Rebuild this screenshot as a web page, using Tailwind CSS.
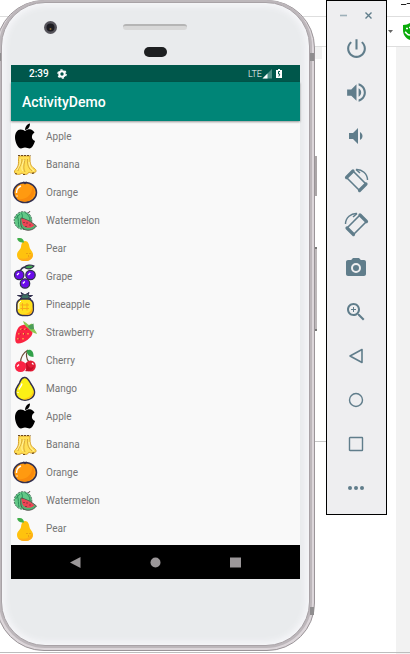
<!DOCTYPE html>
<html lang="en">
<head>
  <meta charset="UTF-8" />
  <meta name="viewport" content="width=device-width, initial-scale=1.0"/>
  <title>ActivityDemo</title>
  <script src="https://cdn.jsdelivr.net/npm/@tailwindcss/browser@4"></script>
</head>
<body class="relative flex h-screen flex-col overflow-hidden bg-white font-[Roboto,sans-serif]">

  <!-- Fruit icons -->
  <svg class="hidden" aria-hidden="true">
    <symbol id="apple" viewBox="0 0 26 28">
      <path d="M13 7C13 4 15 1 18 0.500C18 4 16 6.500 13 7Z"/>
      <path d="M13 8C15 6.500 17 6 19 6.500C20.500 7 21.500 8 22.500 9.500C19 11.500 19 16.500 23 18C22 21 20 25.500 17.500 25.500C16 25.500 15 24.500 13 24.500C11 24.500 10.500 25.500 9 25.500C6 25.500 3 19 3 14.500C3 9.500 5.500 6.500 8.500 6.500C11 6.500 12 7.500 13 8Z"/>
    </symbol>
    <symbol id="banana" viewBox="0 0 26 28">
      <path d="M7 5H18L18 9C18 14 20 16 23 18C25 19.500 24 22 21 22C19 22 18 22 17 21C16 24 12 24 10 22C8 24 3 24 2.500 21C2 19 5 18 6 15C7 12 6 9 7 5Z" fill="#ffdf55" stroke="#d9a32d" stroke-width="1"/>
      <path d="M10 8C10 14 6 17 6 20M13 8C12 14 11 17 13 21M15.500 8C15 14 17 18 20 20" fill="none" stroke="#c8922c" stroke-width="0.700"/>
      <path d="M8 8C9 12 7 16 5 19M12 9C10 14 9 18 11 20M17 11C17 15 19 18 22 20" fill="none" stroke="#fff2a0" stroke-width="1"/>
      <path d="M6 4.500H18.500M3 22.500L5 23M11 23.500L14 23.500M20 22.500L23 21.500" stroke="#6b4a26" stroke-width="1.200" stroke-dasharray="2 1"/>
    </symbol>
    <symbol id="orange" viewBox="0 0 26 28">
      <ellipse cx="13" cy="13.500" rx="11.500" ry="10" fill="#ff9a10" stroke="#33304f" stroke-width="1.500"/>
      <path d="M20.500 7C23.500 11 22.500 18 17 21.500C12 23.500 7 22 5 20C14 21.500 20.500 16 20.500 7Z" fill="#f98a0c"/>
      <path d="M11 3L13 4.500L15 3" fill="none" stroke="#33304f" stroke-width="1.500"/>
      <path d="M4.500 14C4.500 10 6 8 9 7M5 16.500V17.500" fill="none" stroke="#fff" stroke-width="1.400"/>
    </symbol>
    <symbol id="watermelon" viewBox="0 0 26 28">
      <circle cx="11" cy="13.500" r="8.800" fill="#62c987" stroke="#476b57" stroke-width="1" stroke-dasharray="2 1"/>
      <path d="M5 8C7 12 6 17 7 20M9 5.500C12 9 9 13 10 20M13 5.500C17 8 18 11 18 14M3.500 12L8 7" fill="none" stroke="#2c8d5a" stroke-width="1"/>
      <path d="M16 6C17 4 18.500 6 17.500 4" fill="none" stroke="#5a4a48" stroke-width="1"/>
      <path d="M9 11C14 12 20 15 24.500 19C21 24 13 25 9.500 20C8.500 18 8.500 14 9 11Z" fill="#4fb573" stroke="#4b3b3e" stroke-width="0.800"/>
      <path d="M9.500 11.500C14 12.500 19 15 22.500 18.500C19 21.500 14 21.500 11.500 19C10 17 9.500 14 9.500 11.500Z" fill="#ee4455"/>
      <path d="M12 15V16M15 15.500V16.500M14 19V20M18 17.500V18.500" stroke="#3b2630" stroke-width="1"/>
    </symbol>
    <symbol id="pear" viewBox="0 0 26 28">
      <path d="M13 6C16 6 17 9 17.500 12C18 15 21 16 21 20C21 24 17 26 13 26C9 26 5 24 5 20C5 16 8.500 15 9 12C9.500 9 10 6 13 6Z" fill="#ffc20e"/>
      <path d="M20.500 18C21.500 23 18 26 13 26C10 26 7 25 6 23C13 25 18 23 20.500 18Z" fill="#ffab1a"/>
      <path d="M5 3.500C9 2 12 4 12 7.500C8 8 6 6.500 5 3.500Z" fill="#3fae49"/>
      <path d="M15 18V19M18 18V19M16.500 20.500V21.500" stroke="#d98512" stroke-width="1"/>
    </symbol>
    <symbol id="grape" viewBox="0 0 26 28">
      <path d="M8 9C9 5 12 4 14 4" fill="none" stroke="#33304f" stroke-width="1.300"/>
      <path d="M12.500 4.500C14 1.500 19 1.500 22 3C20 6.500 15 6.500 12.500 4.500Z" fill="#3fa54e" stroke="#33304f" stroke-width="1.200"/>
      <g fill="#6a0bea" stroke="#33304f" stroke-width="1.300">
        <circle cx="7.200" cy="12" r="4.700"/>
        <circle cx="18.500" cy="12" r="4.700"/>
        <circle cx="13" cy="20.500" r="4.700"/>
      </g>
      <path d="M5 12L7 10M16.300 12L18.300 10M10.800 20.500L12.800 18.500" stroke="#fff" stroke-width="1.200"/>
    </symbol>
    <symbol id="pineapple" viewBox="0 0 26 28">
      <path d="M13 8L8 7.500L10 6L5.500 4.500L10.500 4.500L9 1.500L13 4L17 1.500L16 4.500L20.500 4.500L16.500 6.500L19 8Z" fill="#3c7062" stroke="#33304f" stroke-width="1"/>
      <rect x="4.800" y="8" width="16.500" height="16.500" rx="5.500" fill="#ffe01d" stroke="#33304f" stroke-width="1.500"/>
      <path d="M20.500 15V19C20.500 22 18 24 15 24H9C15 23.500 20 21 20.500 15Z" fill="#ffb813"/>
      <path d="M10.500 12V19.500M15 12V19.500M8.500 14H17M8.500 17.500H17" stroke="#f7a81c" stroke-width="1"/>
      <path d="M6.800 12V18M7 12L9 10" stroke="#fff" stroke-width="1"/>
    </symbol>
    <symbol id="strawberry" viewBox="0 0 26 28">
      <path d="M11 6C15 5 20 9 20.500 13C21 18 12 24.500 6 24.500C3 24.500 3 20 3.500 17C4.500 11 6 7 11 6Z" fill="#fb2441"/>
      <path d="M11 2C13 2.500 15 5 17 6L19.500 4.500L21.500 9C22.500 11 24 12 25 15C21 14 18 12 16 9C13 7.500 12 5 11 2Z" fill="#8cc850"/>
      <path d="M16 7L21.500 4.500L22 10C19 11 17 10 16 7Z" fill="#4d9d58"/>
      <path d="M9 9.500V11M13 9.500V11M7 14V15.500M11.500 14V15.500M16 14V15.500M6 19V20.500M11 19V20.500" stroke="#ffc04a" stroke-width="1.300"/>
      <path d="M10 10V11M14 10V11M8 14.500V15.500M12.500 14.500V15.500M7 19.500V20.500" stroke="#8e1232" stroke-width="1"/>
    </symbol>
    <symbol id="cherry" viewBox="0 0 26 28">
      <path d="M8.500 16C8.500 10 11 6 16 3M17 15C14 12 14 7 15.500 4" fill="none" stroke="#6b4a35" stroke-width="1.200"/>
      <path d="M14.500 4C17 1.500 22 2.500 21.500 10C17 10 15 7 14.500 4Z" fill="#32a14a"/>
      <ellipse cx="18.500" cy="19" rx="5.300" ry="5.500" fill="#e31c36"/>
      <ellipse cx="8.500" cy="19.500" rx="5.600" ry="5.500" fill="#fa2445"/>
      <path d="M13 16.500C15 18 15 22 13 24C18 25.500 22 22 21.500 19C20 22 16 21 15 16Z" fill="#c40f28"/>
      <path d="M5 19.500L7 17.500M20 16L21.500 17.500" stroke="#fff" stroke-width="1.100"/>
    </symbol>
    <symbol id="mango" viewBox="0 0 26 28">
      <path d="M12 2.500C16 1.500 17 6 19 9C21 12 22.500 14 22.500 17C22.500 22 18 25.300 13 25.300C8 25.300 3.500 22 3.500 17C3.500 13 6 11 7.500 8C8.500 5.500 9 3 12 2.500Z" fill="#fbf016" stroke="#33304f" stroke-width="1.500"/>
      <path d="M21 15C21 20 17 23.500 10 24C14 26 22 23 21.700 17Z" fill="#ffc816"/>
      <path d="M7 14.500C8 12 9.500 11 10 8.500M6 17V18" fill="none" stroke="#fff" stroke-width="1.300"/>
    </symbol>
  </svg>

  <!-- Browser window behind the emulator -->
  <div class="absolute inset-0 flex flex-col" aria-hidden="true">
    <div class="flex h-[17px] justify-end border-b border-[#dedede]">
      <svg class="h-2 w-[9px]" viewBox="0 0 9 8"><path d="M0 4.500H5L6 3.500H9" fill="none" stroke="#222" stroke-width="1"/></svg>
    </div>
    <div class="flex h-[30px] items-center justify-end gap-[10px] border-b border-[#dedede]">
      <svg class="h-[3px] w-[5px]" viewBox="0 0 5 3"><path d="M0 0H5L2.500 3Z" fill="#666"/></svg>
      <svg class="h-[18px] w-[7px]" viewBox="0 0 7 18"><path d="M0 2C3 2 5 1 7 0V17C2 15 0 11 0 7Z" fill="#0aab0a"/><path d="M3 5.500H5M6 4.500H7M2 9C4 10 4 12 7 12" fill="none" stroke="#fff" stroke-width="1.500"/></svg>
    </div>
    <div class="flex flex-1">
      <div class="flex flex-1 flex-col">
        <div class="h-3 w-[322px] bg-[#f2f2f2]"></div>
        <div class="h-[383px] w-[326px] border-b border-[#c8c8c8]"></div>
      </div>
      <div class="w-[14px] bg-[#f2f2f2]"></div>
    </div>
  </div>

  <main class="relative mb-px flex min-h-0 flex-1 items-start gap-[11px] border-b border-[#bdbdbd] pr-[23px] pb-px">

    <!-- Phone -->
    <div class="relative -ml-1 flex h-full min-w-0 flex-1 flex-col rounded-[48px] border border-[#9a9498] bg-[#dcd6da] px-1 pt-px pb-1">
      <div class="absolute top-[155px] -right-[3px] h-10 w-0.5 bg-[#aaa5a7]"></div>
      <div class="absolute top-[246px] -right-[3px] h-[84px] w-0.5 border-y-2 border-[#777] bg-[#bdb8ba]"></div>
      <div class="absolute top-[52px] right-0 h-2 w-1 bg-[#8f8d8f]"></div>
      <div class="absolute right-0 bottom-[35px] h-2 w-1 bg-[#8f8d8f]"></div>
      <div class="absolute top-[52px] left-0 h-2 w-1 bg-[#8f8d8f]"></div>
      <div class="flex min-h-0 flex-1 flex-col rounded-[44px] border border-[#a8a2a6] bg-[#e9ebed] px-[9px] shadow-[inset_0_0_6px_3px_#f7f7fa,0_0_0_2px_#bdb7bb]">

        <div class="h-[62px] shrink-0 pt-[14px]">
          <div class="grid h-5 grid-cols-3 items-center">
            <div class="pl-[33px]">
              <svg class="size-[13px]" viewBox="0 0 13 13"><circle cx="6.500" cy="6.500" r="6.500" fill="#55535a"/><circle cx="6.500" cy="6.500" r="4" fill="#1d1c22"/><circle cx="6.500" cy="8" r="1" fill="#8b6a35"/></svg>
            </div>
            <div class="h-[6px] w-16 justify-self-center rounded-sm border-t-2 border-[#b5b5b5] bg-[#d8d8d8]"></div>
          </div>
          <div class="mx-auto mt-[10px] h-[10px] w-[23px] rounded-full bg-[#1d1f21]"></div>
        </div>

        <!-- Screen -->
        <div class="flex min-h-0 flex-1 flex-col bg-[#f9f9f9]">
          <div class="flex h-[17px] shrink-0 items-center bg-[#00574b] pr-[18px] pl-[18px] text-white">
            <span class="text-[10px] leading-4 font-medium">2:39</span>
            <svg class="ml-2 size-[10px]" viewBox="0 0 10 10"><circle cx="5" cy="5" r="2.700" fill="none" stroke="#fff" stroke-width="2"/><circle cx="5" cy="5" r="4.100" fill="none" stroke="#fff" stroke-width="1.400" stroke-dasharray="2.200 2.090"/></svg>
            <span class="ml-auto text-[9px] leading-4 font-light">LTE</span>
            <svg class="size-[10px]" viewBox="0 0 10 10"><path d="M10 0V9.500H0.500Z" fill="#4e9186"/><path d="M5.500 4.500V9.500H0.500Z" fill="#fff"/></svg>
            <svg class="ml-1 h-[9px] w-[6px]" viewBox="0 0 6 9"><path d="M2 0H4V1H6V9H0V1H2Z" fill="#fff"/><path d="M4 2.500H2.500V5H3.800L2.800 7.500" fill="none" stroke="#00574b" stroke-width="1"/></svg>
          </div>
          <header class="relative flex h-[39px] shrink-0 items-center bg-[#008577] pl-[11px] shadow-[0_1px_2px_#0006]">
            <h1 class="text-[14px] leading-5 font-medium text-white">ActivityDemo</h1>
          </header>
          <ul class="min-h-0 flex-1 overflow-hidden pt-0.5 text-[10px] leading-7 text-[#757575]">
            <li class="flex h-7 gap-2 pl-px"><svg class="h-7 w-[26px]"><use href="#apple"/></svg>Apple</li>
            <li class="flex h-7 gap-2 pl-px"><svg class="h-7 w-[26px]"><use href="#banana"/></svg>Banana</li>
            <li class="flex h-7 gap-2 pl-px"><svg class="h-7 w-[26px]"><use href="#orange"/></svg>Orange</li>
            <li class="flex h-7 gap-2 pl-px"><svg class="h-7 w-[26px]"><use href="#watermelon"/></svg>Watermelon</li>
            <li class="flex h-7 gap-2 pl-px"><svg class="h-7 w-[26px]"><use href="#pear"/></svg>Pear</li>
            <li class="flex h-7 gap-2 pl-px"><svg class="h-7 w-[26px]"><use href="#grape"/></svg>Grape</li>
            <li class="flex h-7 gap-2 pl-px"><svg class="h-7 w-[26px]"><use href="#pineapple"/></svg>Pineapple</li>
            <li class="flex h-7 gap-2 pl-px"><svg class="h-7 w-[26px]"><use href="#strawberry"/></svg>Strawberry</li>
            <li class="flex h-7 gap-2 pl-px"><svg class="h-7 w-[26px]"><use href="#cherry"/></svg>Cherry</li>
            <li class="flex h-7 gap-2 pl-px"><svg class="h-7 w-[26px]"><use href="#mango"/></svg>Mango</li>
            <li class="flex h-7 gap-2 pl-px"><svg class="h-7 w-[26px]"><use href="#apple"/></svg>Apple</li>
            <li class="flex h-7 gap-2 pl-px"><svg class="h-7 w-[26px]"><use href="#banana"/></svg>Banana</li>
            <li class="flex h-7 gap-2 pl-px"><svg class="h-7 w-[26px]"><use href="#orange"/></svg>Orange</li>
            <li class="flex h-7 gap-2 pl-px"><svg class="h-7 w-[26px]"><use href="#watermelon"/></svg>Watermelon</li>
            <li class="flex h-7 gap-2 pl-px"><svg class="h-7 w-[26px]"><use href="#pear"/></svg>Pear</li>
          </ul>
          <nav class="flex h-[34px] shrink-0 items-center justify-center gap-[69px] bg-black">
            <button aria-label="Back"><svg class="size-[11px]" viewBox="0 0 11 11"><path d="M0 5.500L10.500 0V11Z" fill="#9b9799"/></svg></button>
            <button aria-label="Home"><svg class="size-[11px]" viewBox="0 0 11 11"><circle cx="5.500" cy="5.500" r="5" fill="#9b9799"/></svg></button>
            <button aria-label="Overview"><svg class="size-[11px]" viewBox="0 0 11 11"><path d="M0 0.500H11V10.500H0Z" fill="#9b9799"/></svg></button>
          </nav>
        </div>

        <div class="h-[66px] shrink-0"></div>
      </div>
    </div>

    <!-- Emulator toolbar -->
    <aside class="w-[61px] shrink-0 border border-black bg-[#eeeef0] pr-px pb-[3px] text-[#607d8b]">
      <div class="flex h-[26px] items-center justify-center gap-4 pt-0.5">
        <button aria-label="Minimize"><svg class="size-[9px]" viewBox="0 0 9 9"><path d="M1 4.500H8" stroke="#9db0b9" stroke-width="1.600"/></svg></button>
        <button aria-label="Close"><svg class="size-[9px]" viewBox="0 0 9 9"><path d="M1.500 1.500L7.500 7.500M7.500 1.500L1.500 7.500" stroke="currentColor" stroke-width="1.400"/></svg></button>
      </div>
      <button class="flex h-11 w-full items-center justify-center pb-0.5" aria-label="Power">
        <svg class="size-[25px]" viewBox="0 0 24 24" fill="currentColor"><path d="M13 3h-2v10h2V3zm4.830 2.170l-1.420 1.420C17.990 7.860 19 9.810 19 12c0 3.870-3.130 7-7 7s-7-3.130-7-7c0-2.190 1.010-4.140 2.580-5.420L6.170 5.170C4.230 6.820 3 9.260 3 12c0 4.970 4.030 9 9 9s9-4.030 9-9c0-2.740-1.230-5.180-3.170-6.830z"/></svg>
      </button>
      <button class="flex h-11 w-full items-center justify-center pb-0.5" aria-label="Volume up">
        <svg class="size-[25px]" viewBox="0 0 24 24" fill="currentColor"><path d="M3 9v6h4l5 5V4L7 9H3zm13.500 3c0-1.770-1.020-3.290-2.500-4.030v8.050c1.480-.73 2.500-2.250 2.500-4.020zM14 3.230v2.060c2.890.86 5 3.540 5 6.710s-2.110 5.850-5 6.710v2.060c4.010-.91 7-4.490 7-8.770s-2.990-7.860-7-8.770z"/></svg>
      </button>
      <button class="flex h-11 w-full items-center justify-center pb-0.5" aria-label="Volume down">
        <svg class="size-6" viewBox="0 0 24 24" fill="currentColor"><path d="M18.500 12c0-1.770-1.020-3.290-2.500-4.030v8.050c1.480-.73 2.500-2.250 2.500-4.020zM5 9v6h4l5 5V4L9 9H5z"/></svg>
      </button>
      <button class="flex h-11 w-full items-center justify-center pb-0.5" aria-label="Rotate left">
        <svg class="size-[25px]" viewBox="0 0 25 25" fill="none" stroke="currentColor"><path d="M9 3L22 16L15.500 22.500L2.500 9.500Z" stroke-width="1.600" stroke-linejoin="round"/><path d="M2.500 9.500L9 3M22 16L15.500 22.500" stroke-width="3.200" stroke-linecap="round"/><path d="M12 1.500C18 1 23.500 6 23.500 12" stroke-width="1.400"/><path d="M12 1.500L16 5" stroke-width="1.600"/></svg>
      </button>
      <button class="flex h-11 w-full items-center justify-center pb-0.5" aria-label="Rotate right">
        <svg class="size-[25px]" viewBox="0 0 25 25" fill="none" stroke="currentColor"><path d="M16 3L3 16L9.500 22.500L22.500 9.500Z" stroke-width="1.600" stroke-linejoin="round"/><path d="M22.500 9.500L16 3M3 16L9.500 22.500" stroke-width="3.200" stroke-linecap="round"/><path d="M13 1.500C7 1 1.500 6 1.500 12" stroke-width="1.400"/><path d="M13 1.500L9 5" stroke-width="1.600"/></svg>
      </button>
      <button class="flex h-11 w-full items-center justify-center pb-0.5" aria-label="Screenshot">
        <svg class="size-6" viewBox="0 0 24 24" fill="currentColor"><path d="M9 2L7.170 4H4c-1.100 0-2 .9-2 2v12c0 1.100.9 2 2 2h16c1.100 0 2-.9 2-2V6c0-1.100-.9-2-2-2h-3.170L15 2H9z"/><circle cx="12" cy="12" r="4" stroke="#eeeef0" stroke-width="2"/></svg>
      </button>
      <button class="flex h-11 w-full items-center justify-center pb-0.5" aria-label="Zoom">
        <svg class="size-6" viewBox="0 0 24 24" fill="currentColor"><path d="M15.500 14h-.79l-.28-.27C15.410 12.590 16 11.110 16 9.500 16 5.910 13.090 3 9.500 3S3 5.910 3 9.500 5.910 16 9.500 16c1.610 0 3.090-.59 4.230-1.570l.27.28v.79l5 4.990L20.490 19l-4.990-5zm-6 0C7.010 14 5 11.990 5 9.500S7.010 5 9.500 5 14 7.010 14 9.500 11.990 14 9.500 14z"/><path d="M12 10h-2v2H9v-2H7V9h2V7h1v2h2v1z"/></svg>
      </button>
      <button class="flex h-11 w-full items-center justify-center pb-0.5" aria-label="Back">
        <svg class="size-4" viewBox="0 0 16 16" fill="none" stroke="currentColor" stroke-width="1.600"><path d="M2 8L14 1.500V14.500Z" stroke-linejoin="round"/></svg>
      </button>
      <button class="flex h-11 w-full items-center justify-center pb-0.5" aria-label="Home">
        <svg class="size-4" viewBox="0 0 16 16" fill="none" stroke="currentColor" stroke-width="1.400"><circle cx="8" cy="8" r="6.500"/></svg>
      </button>
      <button class="flex h-11 w-full items-center justify-center pb-0.5" aria-label="Overview">
        <svg class="size-4" viewBox="0 0 16 16" fill="none" stroke="currentColor" stroke-width="1.400"><rect x="1.500" y="1.500" width="13" height="13" rx="0.500"/></svg>
      </button>
      <button class="flex h-11 w-full items-center justify-center pb-0.5" aria-label="More">
        <svg class="h-4 w-[18px]" viewBox="0 0 18 16" fill="currentColor"><circle cx="3" cy="8" r="2"/><circle cx="9" cy="8" r="2"/><circle cx="15" cy="8" r="2"/></svg>
      </button>
    </aside>
  </main>
</body>
</html>
